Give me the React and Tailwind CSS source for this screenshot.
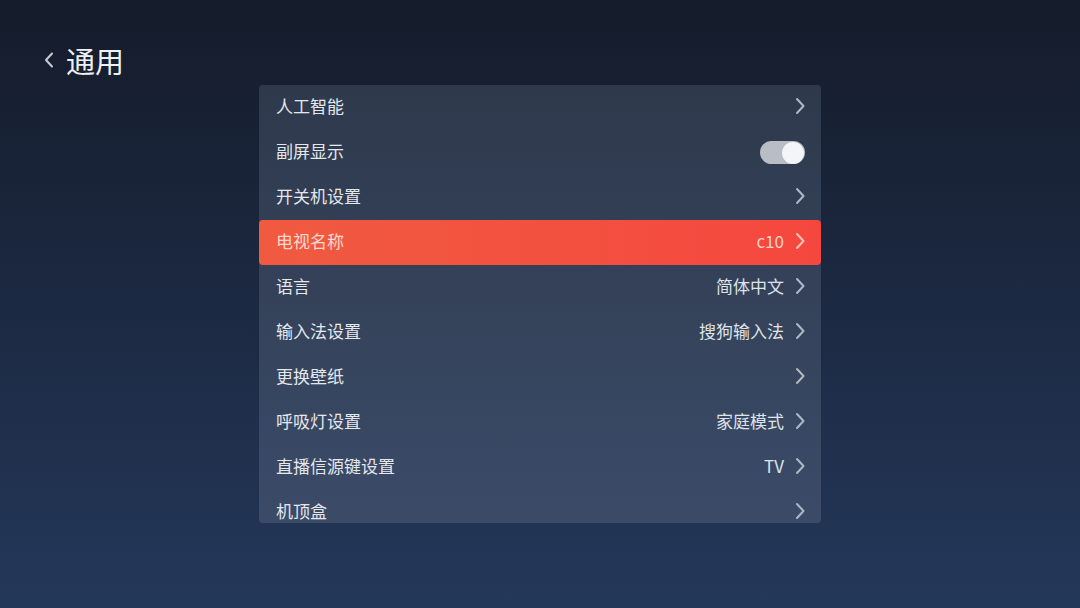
import React from "react";

const rows = [
  { label: "人工智能", arrow: true },
  { label: "副屏显示", toggle: true },
  { label: "开关机设置", arrow: true },
  { label: "电视名称", value: "c10", arrow: true, active: true },
  { label: "语言", value: "简体中文", arrow: true },
  { label: "输入法设置", value: "搜狗输入法", arrow: true },
  { label: "更换壁纸", arrow: true },
  { label: "呼吸灯设置", value: "家庭模式", arrow: true },
  { label: "直播信源键设置", value: "TV", arrow: true },
  { label: "机顶盒", arrow: true },
];

function Chevron({ className }) {
  return (
    <svg width="10" height="18" viewBox="0 0 10 18" className={className}>
      <path d="M2 2 L8.5 9 L2 16" fill="none" stroke="currentColor" strokeWidth="2" strokeLinecap="round" strokeLinejoin="round" />
    </svg>
  );
}

export default function App() {
  return (
    <div
      className="w-[1080px] h-[608px] overflow-hidden bg-gradient-to-b from-[#151c2b] via-[#1c2942] to-[#24385a] text-[#e6e9ee]"
      style={{ fontFamily: '"Noto Sans CJK SC", "Noto Sans", sans-serif' }}
    >
      <div className="flex items-center h-[32px] mt-[44px] pl-[43px] gap-[11px]">
        <svg width="12" height="20" viewBox="0 0 12 20" className="text-[#c8ccd4]">
          <path d="M9 3.5 L3 10 L9 16.5" fill="none" stroke="currentColor" strokeWidth="2" strokeLinecap="round" strokeLinejoin="round" />
        </svg>
        <span className="text-[29px] leading-[32px] text-[#eef0f4]">通用</span>
      </div>
      <div className="ml-[259px] mt-[9px] w-[562px] h-[438px] overflow-hidden rounded-[4px] bg-gradient-to-b from-[#2e394c] to-[#3b4b68] flex flex-col">
        {rows.map((r) => (
          <div
            key={r.label}
            className={
              "shrink-0 h-[45px] flex items-center justify-between pl-[17px] pr-[16px] pb-[3px] text-[17px] " +
              (r.active
                ? "bg-gradient-to-r from-[#f05a40] to-[#f5473f] rounded-[4px]"
                : "")
            }
          >
            <span className={r.active ? "text-[#ffd9cf]" : "text-[#e4e7ec]"}>{r.label}</span>
            <div className="flex items-center gap-[11px]">
              {r.value && (
                <span className={r.active ? "text-[#ffd3c8]" : "text-[#dfe3ea]"}>{r.value}</span>
              )}
              {r.arrow && (
                <Chevron className={r.active ? "text-[#ffc5b8]" : "text-[#b0b7c4]"} />
              )}
              {r.toggle && (
                <div className="w-[45px] h-[23px] mt-[3px] rounded-full bg-[#b9bdc6] flex items-center justify-end pr-[1px]">
                  <div className="w-[22px] h-[22px] rounded-full bg-[#f4f5f7]" />
                </div>
              )}
            </div>
          </div>
        ))}
      </div>
    </div>
  );
}
